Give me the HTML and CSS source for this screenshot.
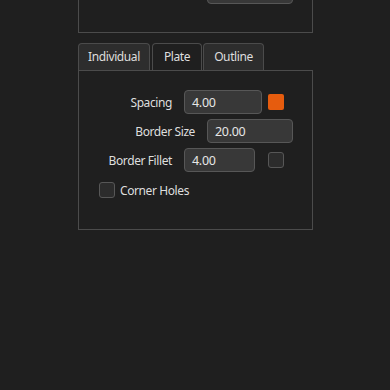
FILE: index.html
```html
<!DOCTYPE html>
<html>
<head>
<meta charset="utf-8">
<link rel="stylesheet" href="styles.css">
</head>
<body>
<div class="top-group">
  <div class="field field-top"></div>
</div>
<div class="tabs">
  <div class="tab tab-ind">Individual</div>
  <div class="tab tab-plate active">Plate</div>
  <div class="tab tab-out">Outline</div>
</div>
<div class="panel">
  <div class="row">
    <span class="lbl lbl-a">Spacing</span>
    <span class="field w78">4.00</span>
    <span class="swatch"></span>
  </div>
  <div class="row">
    <span class="lbl lbl-b">Border Size</span>
    <span class="field w86">20.00</span>
  </div>
  <div class="row">
    <span class="lbl lbl-a">Border Fillet</span>
    <span class="field w71">4.00</span>
    <span class="check check-side"></span>
  </div>
  <div class="row row-check">
    <span class="check"></span>
    <span class="check-lbl">Corner Holes</span>
  </div>
</div>
</body>
</html>
```
FILE: styles.css
```css
html, body {
  margin: 0;
  padding: 0;
  background: #1f1f1f;
  color: #dedede;
  font-family: "Noto Sans", "Liberation Sans", sans-serif;
  font-size: 12px;
  letter-spacing: -0.4px;
  overflow: hidden;
  height: 390px;
}
.top-group {
  box-sizing: border-box;
  margin: -40px 0 0 78px;
  width: 235px;
  height: 73px;
  border: 1px solid #4b4b4b;
  padding: 19px 0 0 128px;
}
.field {
  box-sizing: border-box;
  display: flex;
  align-items: center;
  height: 24px;
  padding-left: 7px;
  background: #383838;
  border: 1px solid #575757;
  border-radius: 4px;
  color: #e6e6e6;
  font-size: 12.5px;
  letter-spacing: -0.3px;
}
.field-top { width: 86px; }
.w78 { width: 78px; }
.w86 { width: 86px; }
.w71 { width: 71px; }
.tabs {
  display: flex;
  gap: 1px;
  margin: 10px 0 0 78px;
  height: 27px;
}
.tab {
  box-sizing: border-box;
  height: 27px;
  border: 1px solid #4b4b4b;
  border-bottom: none;
  border-radius: 4px 4px 0 0;
  background: #2d2d2d;
  display: flex;
  align-items: center;
  justify-content: center;
  padding-bottom: 1px;
}
.tab.active { background: #1f1f1f; }
.tab-ind { width: 72px; margin-right: 1px; }
.tab-plate { width: 50px; }
.tab-out { width: 61px; }
.panel {
  box-sizing: border-box;
  margin-left: 78px;
  width: 235px;
  height: 160px;
  border: 1px solid #4b4b4b;
  padding-top: 19px;
  display: flex;
  flex-direction: column;
  gap: 5px;
}
.row {
  display: flex;
  align-items: center;
  height: 24px;
}
.lbl {
  text-align: right;
  margin-right: 12px;
}
.lbl-a { width: 93px; }
.lbl-b { width: 116px; }
.swatch {
  width: 16px;
  height: 16px;
  margin-left: 6px;
  border-radius: 2px;
  background: #e65c0e;
}
.check {
  box-sizing: border-box;
  width: 16px;
  height: 16px;
  border: 1px solid #575757;
  border-radius: 3px;
  background: #2c2c2c;
}
.check-side { margin-left: 13px; }
.row-check {
  margin-top: 5px;
  padding-left: 20px;
  height: 16px;
}
.check-lbl { margin-left: 5px; }
```
